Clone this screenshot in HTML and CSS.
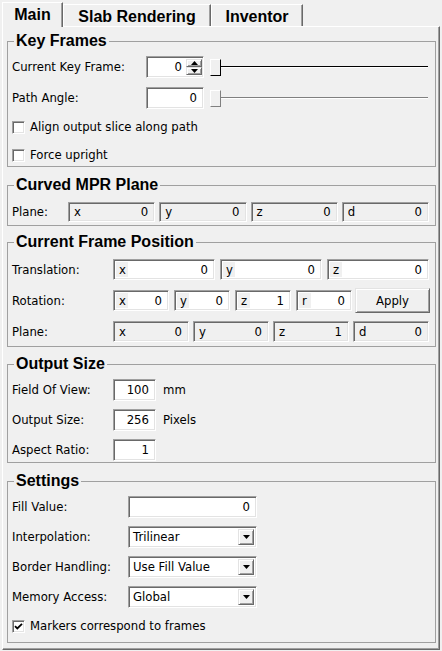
FILE: index.html
```html
<!DOCTYPE html>
<html>
<head>
<meta charset="utf-8">
<link rel="stylesheet" href="styles.css">
</head>
<body>
<div class="tabs">
  <div class="tab tab-main active">Main</div>
  <div class="tab tab-slab">Slab Rendering</div>
  <div class="tab tab-inv">Inventor</div>
</div>
<div class="pane">
  <fieldset class="group g-key">
    <legend>Key Frames</legend>
    <div class="row r-h22">
      <span class="label">Current Key Frame:</span>
      <div class="field sunk spin">
        <span class="val">0</span>
        <div class="spinbtns">
          <span class="sb raised"><svg width="7" height="4" viewBox="0 0 7 4"><path d="M3.5 0L7 4H0z"/></svg></span>
          <span class="sb raised"><svg width="7" height="4" viewBox="0 0 7 4"><path d="M0 0h7L3.5 4z"/></svg></span>
        </div>
      </div>
      <div class="slider focused"><span class="handle"></span><span class="groove"></span></div>
    </div>
    <div class="row r-h22 mt9">
      <span class="label">Path Angle:</span>
      <div class="field sunk edit w58"><span class="val">0</span></div>
      <div class="slider"><span class="handle"></span><span class="groove"></span></div>
    </div>
    <div class="row r-h18 mt9">
      <span class="check sunk"></span><span>Align output slice along path</span>
    </div>
    <div class="row r-h18 mt10">
      <span class="check sunk"></span><span>Force upright</span>
    </div>
  </fieldset>

  <fieldset class="group g-mpr">
    <legend>Curved MPR Plane</legend>
    <div class="row r-h20">
      <span class="label">Plane:</span>
      <div class="vgroup g4">
        <div class="vf sunk ro"><span class="vl">x</span><span class="vv">0</span></div>
        <div class="vf sunk ro"><span class="vl">y</span><span class="vv">0</span></div>
        <div class="vf sunk ro"><span class="vl">z</span><span class="vv">0</span></div>
        <div class="vf sunk ro"><span class="vl">d</span><span class="vv">0</span></div>
      </div>
    </div>
  </fieldset>

  <fieldset class="group g-pos">
    <legend>Current Frame Position</legend>
    <div class="row r-h21">
      <span class="label">Translation:</span>
      <div class="vgroup g5">
        <div class="vf sunk"><span class="vl">x</span><span class="vv">0</span></div>
        <div class="vf sunk"><span class="vl">y</span><span class="vv">0</span></div>
        <div class="vf sunk"><span class="vl">z</span><span class="vv">0</span></div>
      </div>
    </div>
    <div class="row r-h25 mt8">
      <span class="label">Rotation:</span>
      <div class="vgroup g5 rot">
        <div class="vf sunk"><span class="vl">x</span><span class="vv">0</span></div>
        <div class="vf sunk"><span class="vl">y</span><span class="vv">0</span></div>
        <div class="vf sunk"><span class="vl">z</span><span class="vv">1</span></div>
        <div class="vf sunk"><span class="vl">r</span><span class="vv">0</span></div>
      </div>
      <div class="button raised">Apply</div>
    </div>
    <div class="row r-h21 mt8">
      <span class="label">Plane:</span>
      <div class="vgroup g4">
        <div class="vf sunk ro"><span class="vl">x</span><span class="vv">0</span></div>
        <div class="vf sunk ro"><span class="vl">y</span><span class="vv">0</span></div>
        <div class="vf sunk ro"><span class="vl">z</span><span class="vv">1</span></div>
        <div class="vf sunk ro"><span class="vl">d</span><span class="vv">0</span></div>
      </div>
    </div>
  </fieldset>

  <fieldset class="group g-out">
    <legend>Output Size</legend>
    <div class="row r-h22">
      <span class="label">Field Of View:</span>
      <div class="field sunk edit w43"><span class="val">100</span></div>
      <span class="suffix">mm</span>
    </div>
    <div class="row r-h22 mt8">
      <span class="label">Output Size:</span>
      <div class="field sunk edit w43"><span class="val">256</span></div>
      <span class="suffix">Pixels</span>
    </div>
    <div class="row r-h22 mt8">
      <span class="label">Aspect Ratio:</span>
      <div class="field sunk edit w43"><span class="val">1</span></div>
    </div>
  </fieldset>

  <fieldset class="group g-set">
    <legend>Settings</legend>
    <div class="row r-h22">
      <span class="label">Fill Value:</span>
      <div class="field sunk edit w129"><span class="val">0</span></div>
    </div>
    <div class="row r-h22 mt8">
      <span class="label">Interpolation:</span>
      <div class="combo sunk"><span class="ctext">Trilinear</span><span class="cbtn raised"><svg width="7" height="4" viewBox="0 0 7 4"><path d="M0 0h7L3.5 4z"/></svg></span></div>
    </div>
    <div class="row r-h22 mt8">
      <span class="label">Border Handling:</span>
      <div class="combo sunk"><span class="ctext">Use Fill Value</span><span class="cbtn raised"><svg width="7" height="4" viewBox="0 0 7 4"><path d="M0 0h7L3.5 4z"/></svg></span></div>
    </div>
    <div class="row r-h22 mt8">
      <span class="label">Memory Access:</span>
      <div class="combo sunk"><span class="ctext">Global</span><span class="cbtn raised"><svg width="7" height="4" viewBox="0 0 7 4"><path d="M0 0h7L3.5 4z"/></svg></span></div>
    </div>
    <div class="row r-h18 mt9">
      <span class="check sunk"><svg width="9" height="9" viewBox="0 0 9 9"><path d="M1 4.2l2.3 2.3L8 1.8" fill="none" stroke="#000" stroke-width="1.8"/></svg></span><span>Markers correspond to frames</span>
    </div>
  </fieldset>
</div>
</body>
</html>
```

FILE: styles.css
```css
* { box-sizing: border-box; }

body {
  margin: 0;
  width: 442px;
  height: 651px;
  overflow: hidden;
  background: #f0f0f0;
  color: #000;
  font-family: "DejaVu Sans", sans-serif;
  font-size: 11.7px;
}

/* Tabs */
.tabs {
  display: flex;
  align-items: flex-end;
  height: 26px;
  padding-left: 2px;
}
.tab {
  height: 22px;
  padding-top: 2px;
  display: flex;
  justify-content: center;
  align-items: center;
  font: bold 16px "Liberation Sans", Arial, sans-serif;
  border-top: 1px solid #fff;
  border-left: 1px solid #fff;
  border-right: 1px solid #696969;
  box-shadow: inset -1px 0 0 #a0a0a0;
}
.tab-main { width: 61px; }
.tab-slab { width: 148px; }
.tab-inv { width: 92px; }
.tab.active {
  position: relative;
  z-index: 1;
  height: 25px;
  margin-bottom: -1px;
  padding-top: 0;
  background: #f0f0f0;
}

/* Pane */
.pane {
  margin: 0 2px 1px 2px;
  height: 624px;
  border: 1px solid;
  border-color: #fff #696969 #696969 #fff;
  box-shadow: inset -1px -1px 0 #a0a0a0;
  padding: 5px 3px 0 4px;
}

/* Group boxes */
.group {
  margin: 0;
  min-width: 0;
  border: 1px solid #a0a0a0;
  padding: 6px 6px 2px 4px;
}
.group legend {
  margin-left: 2px;
  padding: 0 2px;
  height: 18px;
  font: bold 16px/18px "Liberation Sans", Arial, sans-serif;
}
.g-mpr { margin-top: 9px; padding-top: 8px; padding-bottom: 3px; }
.g-pos { margin-top: 7px; padding-top: 8px; padding-bottom: 4px; }
.g-out { margin-top: 8px; padding-top: 6px; padding-bottom: 1px; }
.g-set { margin-top: 9px; padding-top: 6px; padding-bottom: 7px; }

.g-key .label { width: 134px; }
.g-mpr .label { width: 56px; }
.g-pos .label { width: 101px; }
.g-out .label { width: 101px; }
.g-set .label { width: 116px; }

.row { display: flex; align-items: center; }
.r-h18 { height: 18px; }
.r-h20 { height: 20px; }
.r-h21 { height: 21px; }
.r-h22 { height: 22px; }
.r-h25 { height: 25px; }
.mt8 { margin-top: 8px; }
.mt9 { margin-top: 9px; }
.mt10 { margin-top: 10px; }

.label { flex: none; white-space: nowrap; }

/* 3D borders */
.sunk {
  border: 1px solid;
  border-color: #a0a0a0 #fff #fff #a0a0a0;
  box-shadow: inset 1px 1px 0 #696969, inset -1px -1px 0 #e3e3e3;
}
.raised {
  background: #f0f0f0;
  border: 1px solid;
  border-color: #e3e3e3 #696969 #696969 #e3e3e3;
  box-shadow: inset 1px 1px 0 #fff, inset -1px -1px 0 #a0a0a0;
}

/* Line edits */
.field {
  flex: none;
  height: 22px;
  display: flex;
  align-items: center;
  background: #fff;
}
.field .val { flex: 1; text-align: right; padding-right: 6px; }
.w58 { width: 58px; }
.w43 { width: 43px; }
.w129 { width: 129px; }
.suffix { margin-left: 7px; }

.spin { width: 58px; padding: 2px 1px 2px 0; }
.spin .val { padding-right: 4px; }
.spinbtns {
  width: 16px;
  height: 100%;
  display: flex;
  flex-direction: column;
}
.sb {
  flex: 1;
  display: flex;
  align-items: center;
  justify-content: center;
}
.sb svg { width: 7px; height: 4px; }

/* Slider */
.slider {
  flex: 1;
  height: 17px;
  margin-left: 6px;
  margin-right: 1px;
  display: flex;
  align-items: center;
}
.handle {
  flex: none;
  width: 11px;
  height: 17px;
  background: #f0f0f0;
  border: 1px solid;
  border-color: #fff #808080 #808080 #fff;
}
.groove {
  flex: 1;
  height: 2px;
  border-top: 1px solid #808080;
  border-bottom: 1px solid #fff;
}
.slider.focused .handle { border-right-color: #000; border-bottom-color: #000; }
.slider.focused .groove { border-top-color: #000; }

/* Check boxes */
.check {
  flex: none;
  width: 13px;
  height: 13px;
  margin-right: 5px;
  background: #fff;
  display: flex;
  align-items: center;
  justify-content: center;
}

/* Vector fields */
.vgroup { display: flex; gap: 4px; flex: 1; height: 100%; }
.g5 { gap: 5px; }
.vgroup.rot { flex: none; width: 239px; align-items: center; }
.vf {
  flex: 1;
  min-width: 0;
  display: flex;
  align-items: center;
  background: #fff;
  padding: 2px 1px 2px 2px;
  height: 100%;
}
.r-h25 .vf { height: 21px; }
.vf .vl {
  flex: none;
  width: 12px;
  height: 100%;
  padding-left: 3px;
  display: flex;
  align-items: center;
  background: #f0f0f0;
}
.vf .vv { flex: 1; text-align: right; padding-right: 5px; }
.vf.ro { background: #f0f0f0; }

.button {
  flex: none;
  width: 75px;
  height: 25px;
  margin-left: 3px;
  margin-right: 1px;
  display: flex;
  align-items: center;
  justify-content: center;
}

/* Combos */
.combo {
  flex: none;
  width: 129px;
  height: 22px;
  display: flex;
  align-items: stretch;
  background: #fff;
  padding: 2px;
}
.ctext { flex: 1; display: flex; align-items: center; padding-left: 2px; }
.cbtn {
  flex: none;
  width: 16px;
  display: flex;
  align-items: center;
  justify-content: center;
}
```
